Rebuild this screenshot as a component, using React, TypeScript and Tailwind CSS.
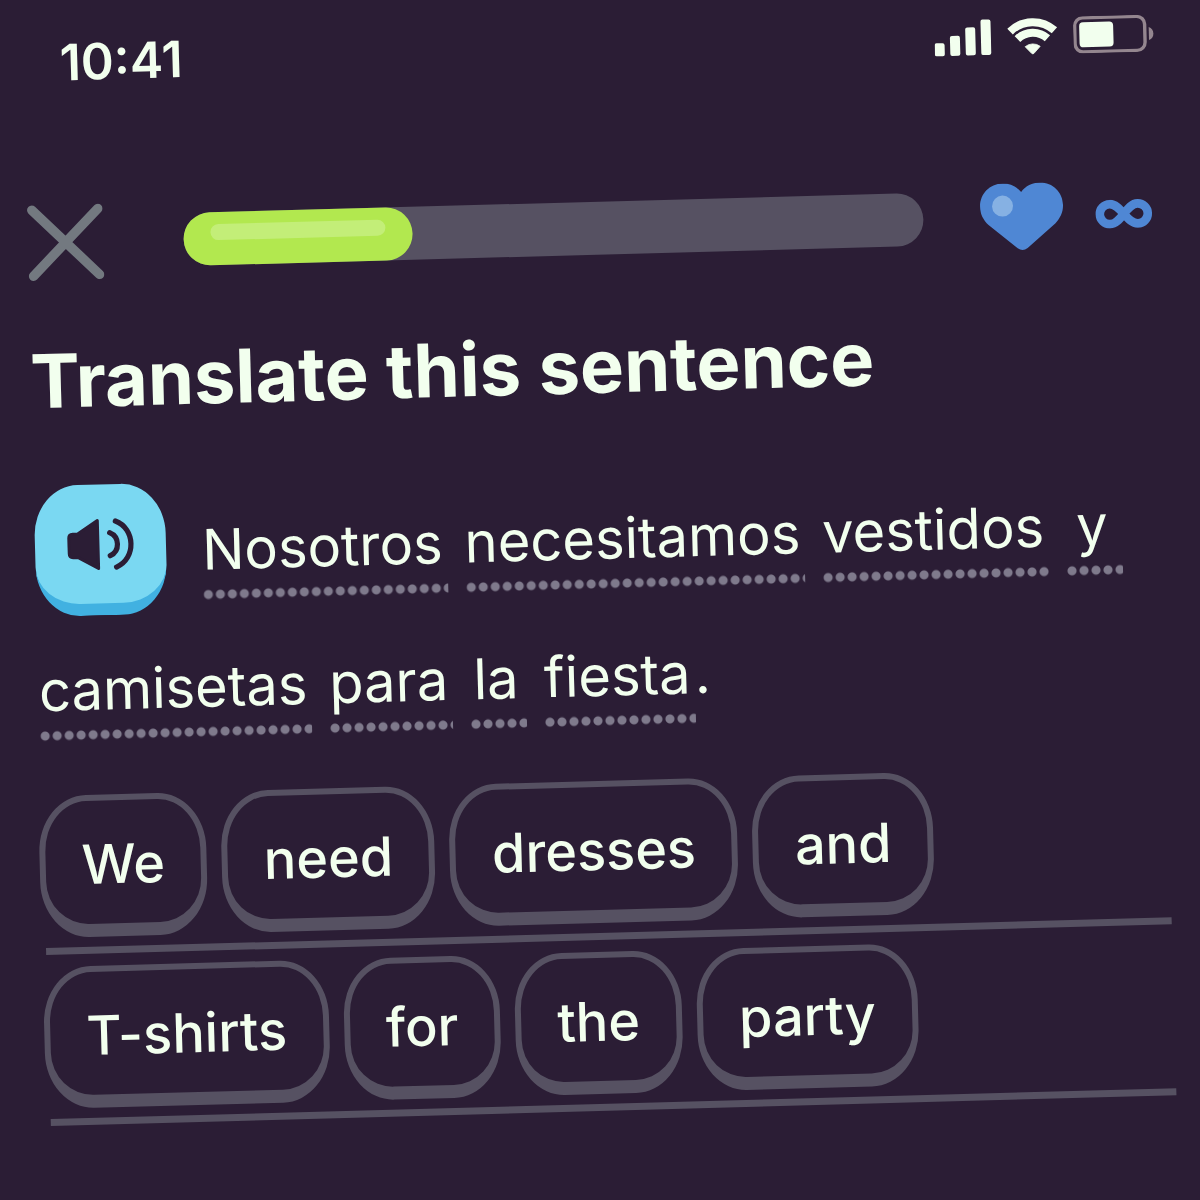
import React from "react";

const firstLine = ["Nosotros", "necesitamos", "vestidos", "y"];
const secondLine = ["camisetas", "para", "la", "fiesta"];
const answerRows = [
  ["We", "need", "dresses", "and"],
  ["T-shirts", "for", "the", "party"],
];

function SignalIcon() {
  return (
    <svg width="57" height="37" viewBox="0 0 57 37" fill="currentColor" aria-hidden="true">
      <rect x="0" y="23" width="10" height="13" rx="2" />
      <rect x="15.500" y="16" width="10" height="20" rx="2" />
      <rect x="31" y="8" width="10" height="28" rx="2" />
      <rect x="46.500" y="0.500" width="10" height="35.500" rx="2" />
    </svg>
  );
}

function WifiIcon() {
  return (
    <svg width="50" height="37" viewBox="0 0 50 37" fill="none" aria-hidden="true">
      <g stroke="currentColor" strokeWidth="8">
        <path d="M2.800 13.200A32.500 32.500 0 0 1 47.200 13.200" />
        <path d="M10 20.900A22 22 0 0 1 40 20.900" />
      </g>
      <path
        d="M17.500 28.800A12 12 0 0 1 32.500 28.800L26 35.800Q25 36.600 24 35.800Z"
        fill="currentColor"
        stroke="currentColor"
        strokeWidth="0.8"
        strokeLinejoin="round"
      />
    </svg>
  );
}

function BatteryIcon() {
  return (
    <svg width="81" height="37" viewBox="0 0 81 37" aria-hidden="true">
      <rect x="1.500" y="1.500" width="70" height="34" rx="8" fill="none" stroke="#94868f" strokeWidth="3.4" />
      <rect x="6" y="6" width="34" height="25" rx="4" fill="currentColor" />
      <path d="M75.500 12.500C78.500 13.500 80 16 80 19C80 22 78.500 24.500 75.500 25.500Z" fill="#94868f" />
    </svg>
  );
}

function CloseIcon() {
  return (
    <svg width="76" height="76" viewBox="0 0 76 76" fill="none" aria-hidden="true">
      <path d="M5 5L71 71M71 5L5 71" stroke="#737980" strokeWidth="9.5" strokeLinecap="round" />
    </svg>
  );
}

function HeartIcon() {
  return (
    <svg width="83" height="67" viewBox="0 0 83 67" aria-hidden="true">
      <path
        d="M41.500 9C37 3 30 0 23 0C10 0 0 10 0 23C0 30 3 36 8 41L36.500 65Q41.500 68.600 46.500 65L75 41C80 36 83 30 83 23C83 10 73 0 60 0C53 0 46 3 41.500 9Z"
        fill="#4f87d4"
      />
      <circle cx="22.500" cy="22.500" r="10.500" fill="#86b1e3" />
    </svg>
  );
}

function InfinityIcon() {
  return (
    <svg width="57" height="29" viewBox="0 0 57 29" fill="none" role="img" aria-label="Unlimited">
      <path
        d="M28.500 14.500C24 9 20 4.500 14.500 4.500A10 10 0 0 0 14.500 24.500C20 24.500 24 20 28.500 14.500C33 9 37 4.500 42.500 4.500A10 10 0 0 1 42.500 24.500C37 24.500 33 20 28.500 14.500Z"
        stroke="#4f87d4"
        strokeWidth="8.600"
      />
    </svg>
  );
}

function SpeakerIcon() {
  return (
    <svg width="68" height="52" viewBox="0 0 68 52" fill="none" aria-hidden="true">
      <path
        d="M6 15H11L31 2V50L11 38.500H6Q2 38.500 2 34.500V19Q2 15 6 15Z"
        fill="#2b1d35"
        stroke="#2b1d35"
        strokeWidth="3"
        strokeLinejoin="round"
      />
      <path
        d="M43 14.500C53 19 53 33 43 37.500M49 3C69 11 69 41 49 49"
        stroke="#2b1d35"
        strokeWidth="5.200"
        strokeLinecap="round"
      />
    </svg>
  );
}

function HintWord({ word }: { word: string }) {
  return (
    <span className="min-w-14 bg-[radial-gradient(circle_at_5px_5px,#7f7a8c_4px,transparent_5px)] bg-[length:12px_10px] bg-[position:0_108px] bg-repeat-x pr-1 text-center">
      {word}
    </span>
  );
}

export default function App() {
  return (
    <div className="min-h-screen overflow-hidden bg-[#2b1d35] font-['Inter',sans-serif] text-[#f2ffee]">
      <main className="origin-top-left -rotate-[1.57deg]">
        <div className="flex items-center justify-between pt-11 pr-[47px] pl-[58px]">
          <time className="text-[50px] leading-10 font-semibold">10:41</time>
          <div className="flex items-center gap-4">
            <SignalIcon />
            <WifiIcon />
            <BatteryIcon />
          </div>
        </div>

        <header className="mt-[122px] flex items-center pr-[54px] pl-[21px]">
          <button type="button" aria-label="Close" className="shrink-0">
            <CloseIcon />
          </button>
          <div
            role="progressbar"
            aria-label="Lesson progress"
            aria-valuenow={31}
            aria-valuemin={0}
            aria-valuemax={100}
            className="mr-[57px] ml-20 h-[53px] flex-1 rounded-full bg-[#565162]"
          >
            <div className="h-full w-[31%] rounded-full bg-[#b2e84f] px-[27px] pt-3">
              <div className="h-4 rounded-full bg-[#c3ee78]" />
            </div>
          </div>
          <div className="flex shrink-0 items-center gap-8">
            <HeartIcon />
            <InfinityIcon />
          </div>
        </header>

        <h1 className="mt-[60px] pl-5 text-[74px] leading-20 font-bold">Translate this sentence</h1>

        <section className="mt-[65px] pr-[54px] pl-5 text-[56px] leading-[137px]">
          <div className="flex flex-wrap gap-x-[18px]">
            <button
              type="button"
              aria-label="Play sentence"
              className="mr-[18px] flex h-[131px] w-[131px] shrink-0 items-center justify-center rounded-[44px/50px] border-b-12 border-[#41b1e1] bg-[#7ad8f2]"
            >
              <SpeakerIcon />
            </button>
            {firstLine.map((word) => (
              <HintWord key={word} word={word} />
            ))}
            {secondLine.map((word) => (
              <span key={word} className="flex">
                <HintWord word={word} />
                {word === "fiesta" && "."}
              </span>
            ))}
          </div>
        </section>

        <section className="mt-9 pr-[54px] pl-4 text-[54px] font-medium">
          {answerRows.map((row) => (
            <div key={row[0]} className="mb-3">
              <div className="flex gap-[15px] pb-2.5">
                {row.map((word) => (
                  <button
                    key={word}
                    type="button"
                    className="h-[142px] rounded-[48px/56px] border-6 border-b-13 border-[#565162] px-9 pt-1"
                  >
                    {word}
                  </button>
                ))}
              </div>
              <hr className="ml-1 h-[7px] border-0 bg-[#565162]" />
            </div>
          ))}
        </section>
      </main>
    </div>
  );
}
